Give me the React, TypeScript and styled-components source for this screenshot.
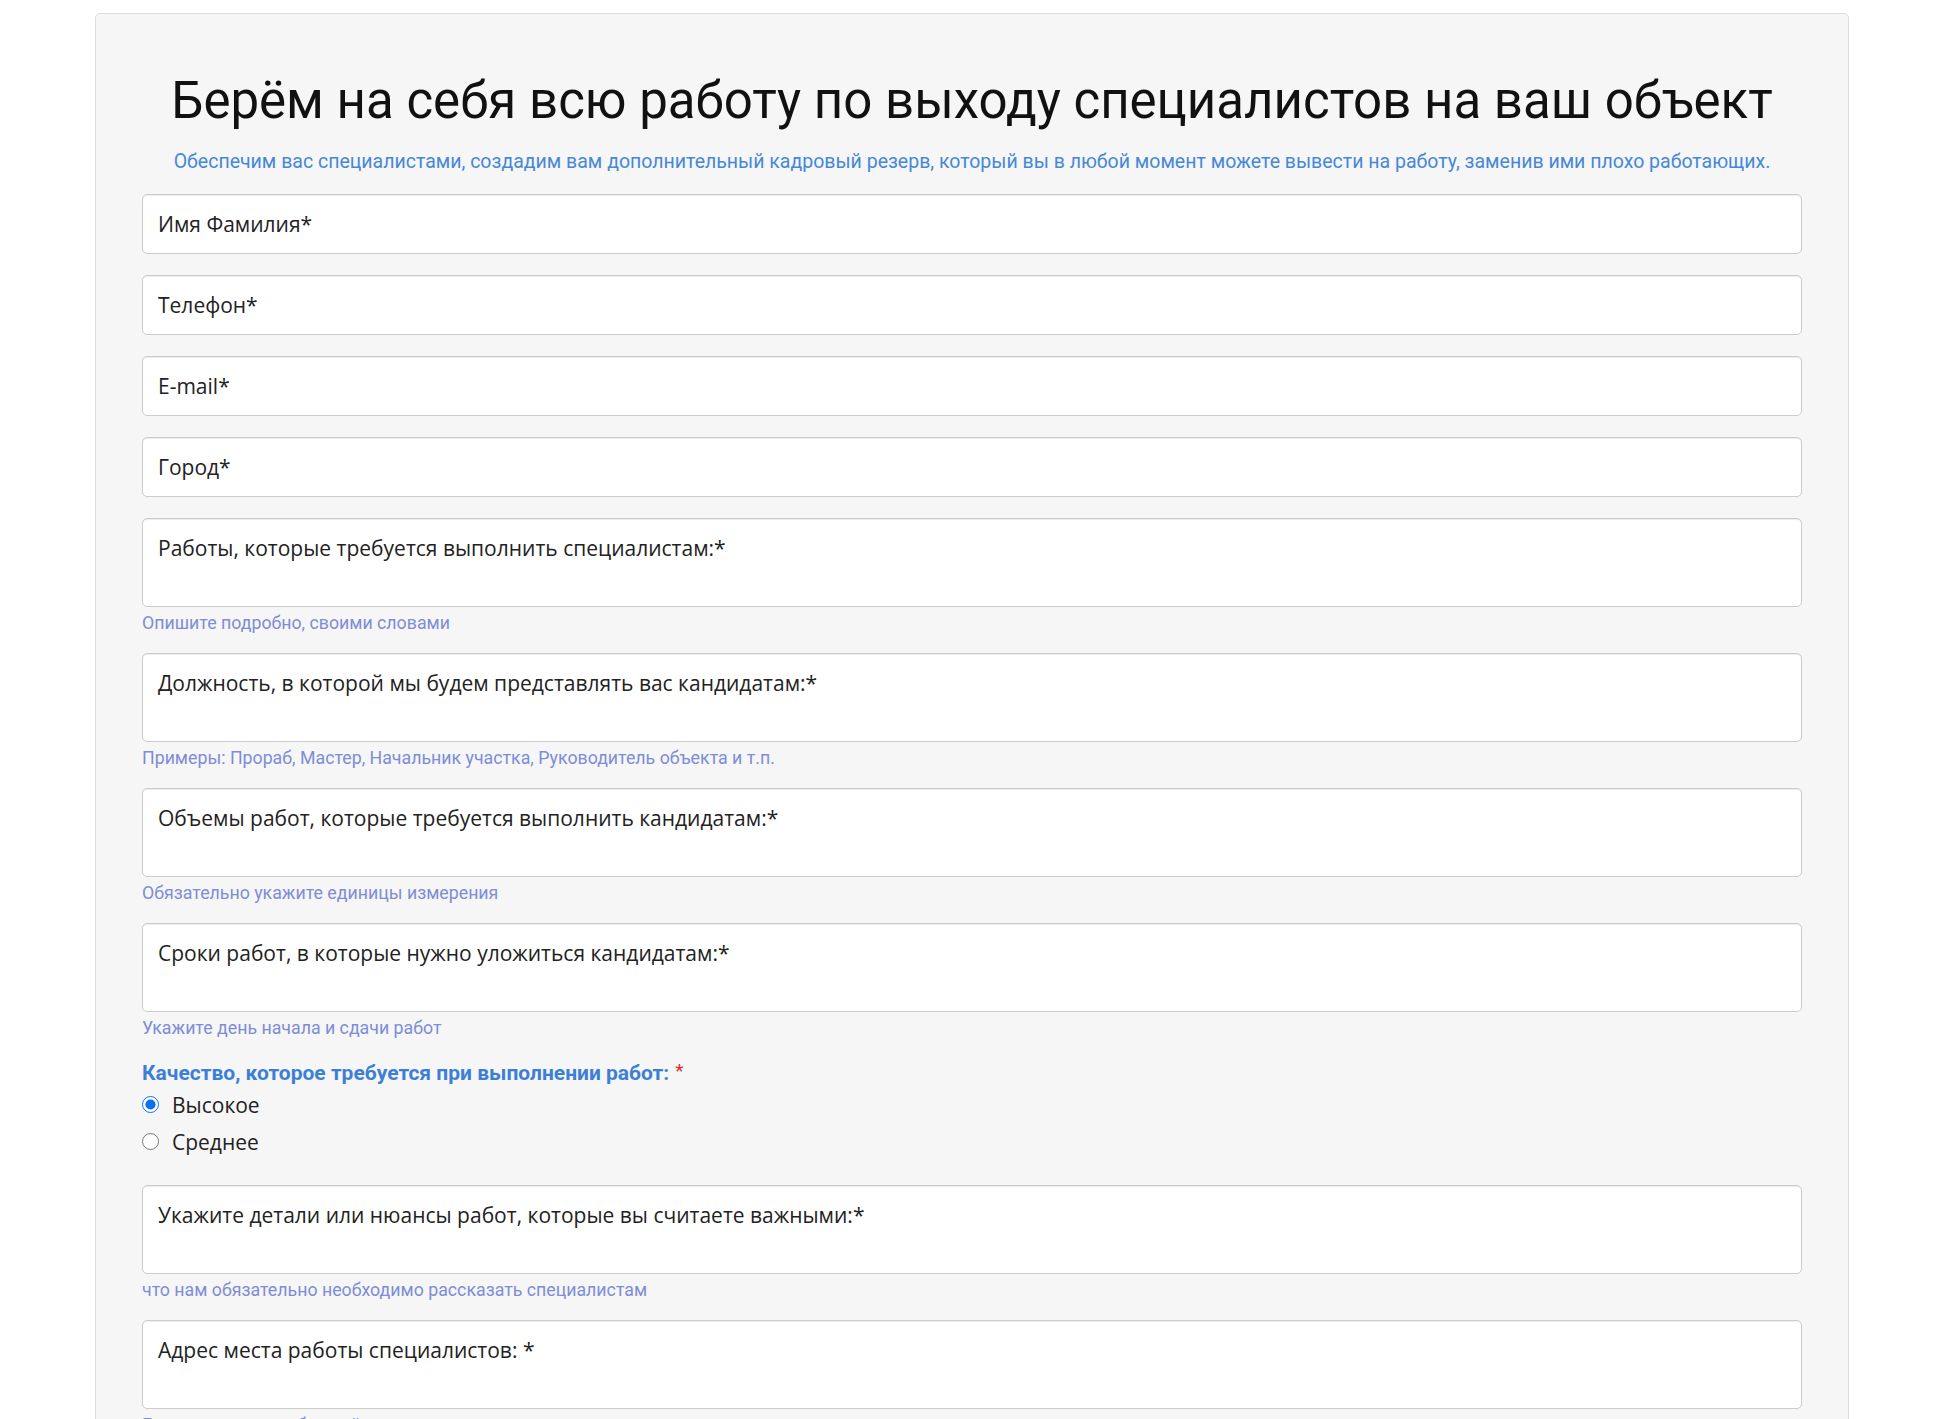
import { FC } from "react";
import styled, { createGlobalStyle } from "styled-components";

const GlobalStyle = createGlobalStyle`
  html, body {
    margin: 0;
    padding: 0;
    background: #ffffff;
  }
  body {
    font-family: "Open Sans", "Liberation Sans", sans-serif;
    color: #222222;
  }
  * {
    box-sizing: border-box;
  }
`;

const Card = styled("div")`
  width: 1754px;
  margin: 13px 0 0 95px;
  padding: 57px 46px 40px 46px;
  background-color: #f6f6f6;
  border: 1px solid #dddddd;
  border-radius: 5px;
`;

const Title = styled("h1")`
  margin: 0;
  font-family: Roboto, "Liberation Sans", sans-serif;
  font-weight: 400;
  font-size: 51px;
  line-height: 60px;
  color: #111111;
  text-align: center;
`;

const Subtitle = styled("p")`
  margin: 18px 0 20px;
  font-family: Roboto, "Liberation Sans", sans-serif;
  font-size: 19.5px;
  line-height: 25px;
  color: #4688d8;
  text-align: center;
`;

const Form = styled("form")`
  display: flex;
  flex-direction: column;
`;

const fieldBase = `
  display: block;
  width: 100%;
  margin: 0;
  background-color: #ffffff;
  border: 1px solid #cccccc;
  border-radius: 5px;
  box-shadow: inset 0 1px 1px rgba(0, 0, 0, 0.075);
  font-family: "Open Sans", "Liberation Sans", sans-serif;
  font-size: 21px;
  color: #222222;
  outline: none;
  &::placeholder {
    color: #222222;
    opacity: 1;
  }
`;

const Input = styled("input")`
  ${fieldBase}
  height: 60px;
  padding: 0 15px;
  margin-bottom: 21px;
`;

const TextArea = styled("textarea")`
  ${fieldBase}
  height: 89px;
  padding: 15px 15px;
  line-height: 28px;
  resize: none;
`;

const Hint = styled("div")`
  margin: 6px 0 19px;
  font-family: Roboto, "Liberation Sans", sans-serif;
  font-size: 17.75px;
  line-height: 21px;
  color: #7d8dd8;
`;

const Group = styled("div")`
  display: flex;
  flex-direction: column;
  margin: 0 0 25px;
`;

const GroupLabel = styled("div")`
  font-family: Roboto, "Liberation Sans", sans-serif;
  font-weight: 700;
  font-size: 21px;
  line-height: 26px;
  color: #3d7fd6;
`;

const Required = styled("span")`
  color: #d9302c;
  font-weight: 400;
  margin-left: 6px;
  vertical-align: 3px;
  font-size: 19px;
`;

const RadioRow = styled("label")`
  display: flex;
  align-items: center;
  height: 37px;
  font-size: 21px;
  color: #222222;
  cursor: pointer;
`;

const Radio = styled("input")`
  width: 17px;
  height: 17px;
  margin: 0 13px 0 0;
  accent-color: #0b6ff5;
`;

interface IField {
  placeholder: string;
  hint?: string;
}

const inputs = ["Имя Фамилия*", "Телефон*", "E-mail*", "Город*"];

const areasTop: IField[] = [
  {
    placeholder: "Работы, которые требуется выполнить специалистам:*",
    hint: "Опишите подробно, своими словами",
  },
  {
    placeholder: "Должность, в которой мы будем представлять вас кандидатам:*",
    hint: "Примеры: Прораб, Мастер, Начальник участка, Руководитель объекта и т.п.",
  },
  {
    placeholder: "Объемы работ, которые требуется выполнить кандидатам:*",
    hint: "Обязательно укажите единицы измерения",
  },
  {
    placeholder: "Сроки работ, в которые нужно уложиться кандидатам:*",
    hint: "Укажите день начала и сдачи работ",
  },
];

const areasBottom: IField[] = [
  {
    placeholder: "Укажите детали или нюансы работ, которые вы считаете важными:*",
    hint: "что нам обязательно необходимо рассказать специалистам",
  },
  {
    placeholder: "Адрес места работы специалистов: *",
    hint: "Город, улица, дом, ближайшая станция метро или ориентир",
  },
];

const AreaField: FC<IField> = ({ placeholder, hint }) => (
  <>
    <TextArea placeholder={placeholder} />
    {hint && <Hint>{hint}</Hint>}
  </>
);

export default function App() {
  return (
    <>
      <GlobalStyle />
      <Card>
        <Title>Берём на себя всю работу по выходу специалистов на ваш объект</Title>
        <Subtitle>
          Обеспечим вас специалистами, создадим вам дополнительный кадровый резерв, который вы в любой
          момент можете вывести на работу, заменив ими плохо работающих.
        </Subtitle>
        <Form onSubmit={(e) => e.preventDefault()}>
          {inputs.map((p) => (
            <Input key={p} placeholder={p} />
          ))}
          {areasTop.map((a) => (
            <AreaField key={a.placeholder} {...a} />
          ))}
          <Group>
            <GroupLabel>
              Качество, которое требуется при выполнении работ:<Required>*</Required>
            </GroupLabel>
            <RadioRow>
              <Radio type="radio" name="quality" defaultChecked />
              Высокое
            </RadioRow>
            <RadioRow>
              <Radio type="radio" name="quality" />
              Среднее
            </RadioRow>
          </Group>
          {areasBottom.map((a) => (
            <AreaField key={a.placeholder} {...a} />
          ))}
        </Form>
      </Card>
    </>
  );
}
